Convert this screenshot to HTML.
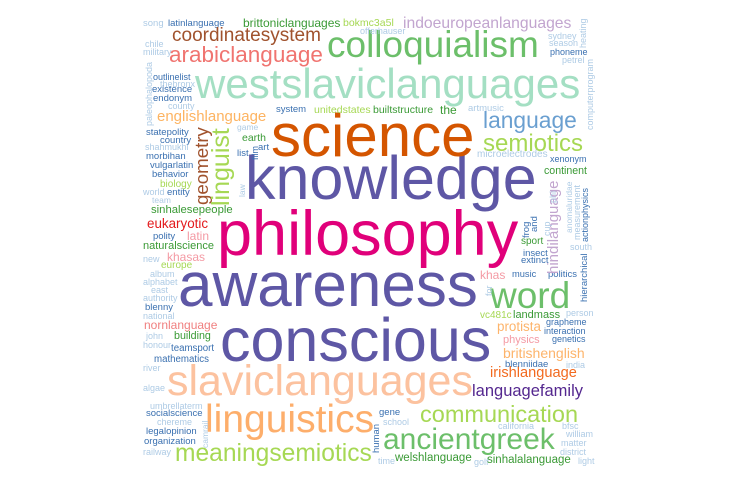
<!DOCTYPE html>
<html><head><meta charset="utf-8"><style>
html,body{margin:0;padding:0;background:#fff;width:735px;height:487px;overflow:hidden}
body{position:relative;font-family:"Liberation Sans",Arial,sans-serif}
span{position:absolute;white-space:nowrap;line-height:1}
.v{transform-origin:0 0;transform:rotate(-90deg)}
.L{color:#aecbe5}.B{color:#3a70b0}.G{color:#3a9a35}.LG{color:#a6d854}.P{color:#f49aa4}
</style></head><body>
<span style="left:217px;top:203px;font-size:63px;color:#e0007a">philosophy</span>
<span style="left:245px;top:148px;font-size:61px;color:#5e57a5">knowledge</span>
<span style="left:178px;top:255px;font-size:62px;color:#5e57a5">awareness</span>
<span style="left:220px;top:310px;font-size:61px;color:#5e57a5">conscious</span>
<span style="left:271px;top:106px;font-size:60px;color:#d45500">science</span>
<span style="left:195px;top:63px;font-size:42px;color:#a4dfc3">westslaviclanguages</span>
<span style="left:327px;top:26px;font-size:37px;color:#6cbf6a">colloquialism</span>
<span style="left:167px;top:360px;font-size:43px;color:#fcc29f">slaviclanguages</span>
<span style="left:205px;top:400px;font-size:39px;color:#fdae6b">linguistics</span>
<span style="left:490px;top:277px;font-size:37px;color:#6cbf6a">word</span>
<span style="left:383px;top:425px;font-size:30px;color:#6cbf6a">ancientgreek</span>
<span style="left:420px;top:403px;font-size:23.5px;color:#a6d854">communication</span>
<span style="left:175px;top:442px;font-size:24.6px;color:#a6d854">meaningsemiotics</span>
<span style="left:472px;top:383px;font-size:16.5px;color:#54278f">languagefamily</span>
<span style="left:490px;top:366px;font-size:14.6px;color:#f26a1f">irishlanguage</span>
<span style="left:503px;top:346px;font-size:14px;color:#fdb46b">britishenglish</span>
<span class="P" style="left:503px;top:335px;font-size:11px">physics</span>
<span style="left:497px;top:320px;font-size:13.4px;color:#fdb46b">protista</span>
<span class="G" style="left:513px;top:310px;font-size:11px">landmass</span>
<span class="LG" style="left:480px;top:311px;font-size:10px">vc481c</span>
<span class="B" style="left:546px;top:318px;font-size:9px">grapheme</span>
<span class="B" style="left:544px;top:327px;font-size:9px">interaction</span>
<span class="B" style="left:552px;top:335px;font-size:9px">genetics</span>
<span class="L" style="left:566px;top:309px;font-size:9px">person</span>
<span class="B" style="left:505px;top:360px;font-size:9.5px">blenniidae</span>
<span class="L" style="left:566px;top:361px;font-size:9px">india</span>
<span class="P" style="left:480px;top:269px;font-size:12px">khas</span>
<span class="B" style="left:512px;top:270px;font-size:9.3px">music</span>
<span class="B" style="left:548px;top:270px;font-size:9.5px">politics</span>
<span class="B" style="left:523px;top:249px;font-size:9.5px">insect</span>
<span class="B" style="left:521px;top:256px;font-size:9.5px">extinct</span>
<span class="G" style="left:521px;top:237px;font-size:10px">sport</span>
<span class="L" style="left:570px;top:243px;font-size:9px">south</span>
<span class="B" style="left:379px;top:408px;font-size:9.5px">gene</span>
<span class="L" style="left:383px;top:418px;font-size:9px">school</span>
<span class="L" style="left:498px;top:422px;font-size:9px">california</span>
<span class="L" style="left:562px;top:422px;font-size:9px">bfsc</span>
<span class="L" style="left:566px;top:430px;font-size:9px">william</span>
<span class="L" style="left:561px;top:439px;font-size:9px">matter</span>
<span class="L" style="left:560px;top:448px;font-size:9px">district</span>
<span class="L" style="left:578px;top:457px;font-size:9px">light</span>
<span class="L" style="left:378px;top:457px;font-size:9px">time</span>
<span class="G" style="left:395px;top:453px;font-size:11.5px">welshlanguage</span>
<span class="L" style="left:474px;top:458px;font-size:9px">golf</span>
<span class="G" style="left:487px;top:455px;font-size:11.5px">sinhalalanguage</span>
<span style="left:403px;top:16px;font-size:15.7px;color:#c2a5cf">indoeuropeanlanguages</span>
<span class="LG" style="left:343px;top:18px;font-size:10.5px">bokmc3a5l</span>
<span class="L" style="left:360px;top:27px;font-size:9px">offerhauser</span>
<span class="L" style="left:548px;top:32px;font-size:9px">sydney</span>
<span class="L" style="left:549px;top:39px;font-size:9px">season</span>
<span class="B" style="left:550px;top:48px;font-size:9px">phoneme</span>
<span class="L" style="left:562px;top:56px;font-size:9px">petrel</span>
<span class="G" style="left:373px;top:105px;font-size:10.5px">builtstructure</span>
<span class="G" style="left:440px;top:104px;font-size:12px">the</span>
<span class="L" style="left:468px;top:104px;font-size:9.5px">artmusic</span>
<span class="LG" style="left:314px;top:105px;font-size:10.5px">unitedstates</span>
<span class="B" style="left:276px;top:105px;font-size:9.5px">system</span>
<span style="left:483px;top:109px;font-size:22.8px;color:#6a9fd0">language</span>
<span style="left:483px;top:132px;font-size:24px;color:#a6d854">semiotics</span>
<span class="L" style="left:477px;top:150px;font-size:10px">microelectrodes</span>
<span class="B" style="left:550px;top:155px;font-size:9px">xenonym</span>
<span class="G" style="left:544px;top:166px;font-size:10.6px">continent</span>
<span class="L" style="left:143px;top:19px;font-size:9.5px">song</span>
<span class="B" style="left:168px;top:19px;font-size:9.5px">latinlanguage</span>
<span class="G" style="left:243px;top:17px;font-size:12px">brittoniclanguages</span>
<span style="left:172px;top:26px;font-size:19px;color:#a0522d">coordinatesystem</span>
<span style="left:169px;top:44px;font-size:22.5px;color:#f07470">arabiclanguage</span>
<span class="L" style="left:145px;top:40px;font-size:9px">chile</span>
<span class="L" style="left:143px;top:48px;font-size:9px">military</span>
<span class="B" style="left:153px;top:73px;font-size:9px">outlinelist</span>
<span class="L" style="left:160px;top:80px;font-size:9px">thebronx</span>
<span class="B" style="left:152px;top:85px;font-size:9.5px">existence</span>
<span class="B" style="left:153px;top:94px;font-size:9.5px">endonym</span>
<span class="L" style="left:168px;top:102px;font-size:9px">county</span>
<span style="left:157px;top:109px;font-size:15px;color:#fdb462">englishlanguage</span>
<span class="B" style="left:146px;top:128px;font-size:9.5px">statepolity</span>
<span class="B" style="left:160px;top:136px;font-size:9.5px">country</span>
<span class="L" style="left:145px;top:143px;font-size:9px">shahmukhi</span>
<span class="B" style="left:146px;top:152px;font-size:9.5px">morbihan</span>
<span class="B" style="left:150px;top:161px;font-size:9.5px">vulgarlatin</span>
<span class="B" style="left:152px;top:170px;font-size:9.5px">behavior</span>
<span class="LG" style="left:160px;top:180px;font-size:10px">biology</span>
<span class="L" style="left:143px;top:188px;font-size:9px">world</span>
<span class="B" style="left:167px;top:188px;font-size:9.5px">entity</span>
<span class="L" style="left:152px;top:196px;font-size:8.5px">team</span>
<span class="L" style="left:237px;top:123px;font-size:8.5px">game</span>
<span class="G" style="left:242px;top:133px;font-size:10.5px">earth</span>
<span class="B" style="left:237px;top:149px;font-size:9.5px">list</span>
<span class="B" style="left:258px;top:143px;font-size:9.5px">art</span>
<span class="G" style="left:151px;top:205px;font-size:11.3px">sinhalesepeople</span>
<span style="left:147px;top:217px;font-size:13.4px;color:#e31a1c">eukaryotic</span>
<span class="B" style="left:153px;top:232px;font-size:9.5px">polity</span>
<span class="P" style="left:187px;top:230px;font-size:12px">latin</span>
<span class="G" style="left:143px;top:241px;font-size:11px">naturalscience</span>
<span class="L" style="left:143px;top:255px;font-size:9px">new</span>
<span class="P" style="left:167px;top:251px;font-size:12px">khasas</span>
<span class="LG" style="left:161px;top:261px;font-size:10px">europe</span>
<span class="L" style="left:150px;top:270px;font-size:9px">album</span>
<span class="L" style="left:143px;top:278px;font-size:9px">alphabet</span>
<span class="L" style="left:151px;top:286px;font-size:9px">east</span>
<span class="L" style="left:143px;top:294px;font-size:9px">authority</span>
<span class="B" style="left:145px;top:303px;font-size:9.5px">blenny</span>
<span class="L" style="left:143px;top:312px;font-size:9px">national</span>
<span style="left:144px;top:319px;font-size:12px;color:#f08080">nornlanguage</span>
<span class="L" style="left:146px;top:332px;font-size:9px">john</span>
<span class="G" style="left:174px;top:331px;font-size:10.7px">building</span>
<span class="L" style="left:143px;top:341px;font-size:9px">honour</span>
<span class="B" style="left:171px;top:344px;font-size:9.7px">teamsport</span>
<span class="B" style="left:154px;top:355px;font-size:9.7px">mathematics</span>
<span class="L" style="left:143px;top:364px;font-size:9px">river</span>
<span class="L" style="left:143px;top:384px;font-size:9px">algae</span>
<span class="L" style="left:150px;top:402px;font-size:9px">umbrellaterm</span>
<span class="B" style="left:146px;top:409px;font-size:9.5px">socialscience</span>
<span class="L" style="left:157px;top:418px;font-size:9px">chereme</span>
<span class="B" style="left:146px;top:427px;font-size:9.5px">legalopinion</span>
<span class="B" style="left:144px;top:437px;font-size:9.5px">organization</span>
<span class="L" style="left:143px;top:448px;font-size:9px">railway</span>
<span class="v" style="left:193px;top:205px;font-size:18.7px;color:#a0522d">geometry</span>
<span class="v" style="left:209px;top:206px;font-size:25px;color:#a6d854">linguist</span>
<span class="v" style="left:546px;top:274px;font-size:15px;color:#c2a5cf">hindilanguage</span>
<span class="v B" style="left:580px;top:302px;font-size:9.5px">hierarchical</span>
<span class="v L" style="left:586px;top:130px;font-size:9px">computerprogram</span>
<span class="v L" style="left:579px;top:48px;font-size:9px">heating</span>
<span class="v B" style="left:372px;top:453px;font-size:9.5px">human</span>
<span class="v L" style="left:201px;top:448px;font-size:8.5px">camrail</span>
<span class="v L" style="left:145px;top:126px;font-size:9px">paleophalopoda</span>
<span class="v L" style="left:238px;top:197px;font-size:8.5px">law</span>
<span class="v B" style="left:251px;top:160px;font-size:9px">film</span>
<span class="v L" style="left:485px;top:296px;font-size:9px">for</span>
<span class="v B" style="left:522px;top:238px;font-size:9.5px">frog</span>
<span class="v B" style="left:530px;top:232px;font-size:9.5px">and</span>
<span class="v L" style="left:543px;top:236px;font-size:9px">cup</span>
<span class="v L" style="left:549px;top:203px;font-size:9px">phi</span>
<span class="v L" style="left:565px;top:233px;font-size:8.5px">anomaluridae</span>
<span class="v L" style="left:573px;top:240px;font-size:9px">measurement</span>
<span class="v B" style="left:581px;top:242px;font-size:9px">actionphysics</span>
</body></html>
